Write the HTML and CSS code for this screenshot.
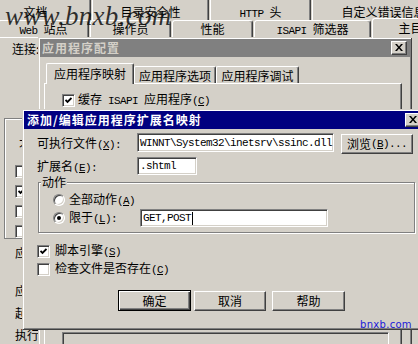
FILE: index.html
```html
<!DOCTYPE html>
<html lang="zh-CN">
<head>
    <meta charset="UTF-8">
    <title>添加/编辑应用程序扩展名映射</title>
    <link rel="stylesheet" href="styles.css">
</head>
<body>
    <!-- site properties sheet, behind both dialogs -->
    <div class="sheet">
        <div class="tabrow row1">
            <div class="tab w-doc">文档</div>
            <div class="tab w-sec">目录安全性</div>
            <div class="tab w-http"><span class="a">HTTP </span>头</div>
            <div class="tab w-err">自定义错误信息</div>
        </div>
        <div class="tabrow row2">
            <div class="tab w-web"><span class="a">Web </span>站点</div>
            <div class="tab w-op">操作员</div>
            <div class="tab w-perf">性能</div>
            <div class="tab w-isapi"><span class="a">ISAPI </span>筛选器</div>
            <div class="tab w-home on">主目录</div>
        </div>
        <div class="sheet-body">
            <div class="conn">连接:</div>
            <div class="sheet-group">
                <div class="cut">不</div>
                <div class="chk"></div>
                <div class="chk"><svg width="7" height="7" viewBox="0 0 7 7"><path d="M0.5 3l2 2 4-4" fill="none" stroke="#000" stroke-width="1.8"/></svg></div>
                <div class="chk"></div>
                <div class="chk"></div>
            </div>
            <div class="side side-1">应</div>
            <div class="side side-2">应</div>
            <div class="side side-3">起</div>
            <div class="side side-4">执行</div>
        </div>
    </div>

    <!-- 应用程序配置 (inactive) -->
    <div class="win cfg">
        <div class="title">
            <span>应用程序配置</span>
            <div class="close"><svg width="8" height="7" viewBox="0 0 8 7"><path d="M0 0h2l2 2.5L6 0h2L5 3.5 8 7H6L4 4.5 2 7H0l3-3.5z"/></svg></div>
        </div>
        <div class="cfg-body">
            <div class="ctabs">
                <div class="ctab on w-map">应用程序映射</div>
                <div class="ctab w-opt">应用程序选项</div>
                <div class="ctab w-dbg">应用程序调试</div>
            </div>
            <div class="cpanel">
                <div class="check-row">
                    <div class="chk"><svg width="7" height="7" viewBox="0 0 7 7"><path d="M0.5 3l2 2 4-4" fill="none" stroke="#000" stroke-width="1.8"/></svg></div>
                    <span>缓存<span class="a"> ISAPI </span>应用程序<span class="a">(<u>C</u>)</span></span>
                </div>
                <div class="listbox"></div>
            </div>
        </div>
    </div>

    <!-- 添加/编辑应用程序扩展名映射 (active) -->
    <div class="win map">
        <div class="title active">
            <span>添加/编辑应用程序扩展名映射</span>
            <div class="close"><svg width="8" height="7" viewBox="0 0 8 7"><path d="M0 0h2l2 2.5L6 0h2L5 3.5 8 7H6L4 4.5 2 7H0l3-3.5z"/></svg></div>
        </div>
        <div class="map-body">
            <div class="field-row">
                <label class="field-label">可执行文件<span class="a">(<u>X</u>):</span></label>
                <div class="edit exe">WINNT\System32\inetsrv\ssinc.dll</div>
                <button class="btn browse">浏览<span class="a">(<u>B</u>)...</span></button>
            </div>
            <div class="field-row row-ext">
                <label class="field-label">扩展名<span class="a">(<u>E</u>):</span></label>
                <div class="edit ext">.shtml</div>
            </div>
            <fieldset class="verbs">
                <legend>动作</legend>
                <div class="verbs-inner">
                    <div class="opt-row">
                        <div class="radio"></div>
                        <span>全部动作<span class="a">(<u>A</u>)</span></span>
                    </div>
                    <div class="opt-row row-limit">
                        <div class="radio on"></div>
                        <span class="opt-label">限于<span class="a">(<u>L</u>):</span></span>
                        <div class="edit verb-list">GET,POST<span class="caret"></span></div>
                    </div>
                </div>
            </fieldset>
            <div class="check-row first">
                <div class="chk"><svg width="7" height="7" viewBox="0 0 7 7"><path d="M0.5 3l2 2 4-4" fill="none" stroke="#000" stroke-width="1.8"/></svg></div>
                <span>脚本引擎<span class="a">(<u>S</u>)</span></span>
            </div>
            <div class="check-row">
                <div class="chk"></div>
                <span>检查文件是否存在<span class="a">(<u>C</u>)</span></span>
            </div>
            <div class="btn-row">
                <button class="btn def">确定</button>
                <button class="btn cancel">取消</button>
                <button class="btn help">帮助</button>
            </div>
        </div>
    </div>

    <div class="mark mark-top">www.bnxb.com</div>
    <div class="mark mark-bottom">bnxb.com</div>
</body>
</html>
```

FILE: styles.css
```css
* {
    box-sizing: border-box;
}
body {
    margin: 0;
    width: 418px;
    height: 344px;
    overflow: hidden;
    position: relative;
    background: #d4d0c8;
    color: #000;
    font-family: "Noto Sans CJK SC", sans-serif;
    font-size: 12px;
    line-height: 12px;
}
.a {
    font-family: "Liberation Mono", monospace;
    font-size: 11px;
    letter-spacing: -0.6px;
}
u {
    text-underline-offset: 1px;
}

/* back property sheet */
.sheet {
    width: 418px;
    height: 344px;
}
.tabrow {
    display: flex;
    gap: 1px;
    white-space: nowrap;
}
.row1 {
    margin: -3px 0 0 -20px;
    height: 23px;
}
.row2 {
    margin-left: -2px;
    height: 17px;
    align-items: flex-start;
}
.tab {
    flex: none;
    text-align: center;
    background: #d4d0c8;
    border: 1px solid #fff;
    border-bottom: none;
    border-right-color: #404040;
    box-shadow: inset -1px 0 #808080;
    border-radius: 3px 3px 0 0;
}
.row1 .tab {
    height: 23px;
    padding-top: 8px;
}
.row2 .tab {
    height: 17px;
    padding-top: 2px;
}
.row2 .tab.on {
    height: 20px;
    margin-top: -2px;
    padding-top: 3px;
    position: relative;
    z-index: 1;
}
.w-doc { width: 111px; }
.w-sec { width: 117px; }
.w-http { width: 101px; }
.w-err { width: 143px; }
.w-web { width: 91px; }
.w-op { width: 81px; }
.w-perf { width: 81px; }
.w-isapi { width: 117px; }
.w-home { width: 89px; }

.sheet-body {
    border-top: 1px solid #fff;
    padding: 5px 0 0 4px;
    height: 307px;
}
.conn {
    margin-left: 8px;
}
.sheet-group {
    margin-top: 63px;
    width: 40px;
    height: 121px;
    border-top: 1px solid #808080;
    border-left: 1px solid #808080;
    border-bottom: 1px solid #808080;
    box-shadow: inset 1px 1px #fff;
    padding: 20px 0 0 10px;
}
.cut {
    margin-left: 4px;
}
.sheet-group .chk {
    margin-top: 7px;
}
.sheet-group .cut + .chk {
    margin-top: 14px;
}
.side {
    margin-left: 11px;
}
.side-1 { margin-top: 8px; }
.side-2 { margin-top: 26px; }
.side-3 { margin-top: 10px; }
.side-4 { margin-top: 10px; }

/* windows */
.win {
    position: absolute;
    background: #d4d0c8;
    border: 1px solid;
    border-color: #d4d0c8 #404040 #404040 #d4d0c8;
    box-shadow: inset 1px 1px #fff, inset -1px -1px #808080;
    padding: 1px;
}
.cfg {
    left: 38px;
    top: 37px;
    width: 374px;
    height: 330px;
}
.map {
    left: 22px;
    top: 109px;
    width: 403px;
    height: 221px;
}
.title {
    display: flex;
    align-items: center;
    height: 18px;
    padding: 0 3px 0 2px;
    font-weight: bold;
    letter-spacing: 1px;
    white-space: nowrap;
    background: #808080;
    color: #d4d0c8;
}
.title.active {
    background: #000080;
    color: #fff;
    padding: 0 2px 0 3px;
}
.close {
    margin-left: auto;
    width: 16px;
    height: 14px;
    background: #d4d0c8;
    border: 1px solid;
    border-color: #fff #404040 #404040 #fff;
    box-shadow: inset -1px -1px #808080;
    display: flex;
    align-items: center;
    justify-content: center;
    padding: 0 1px 1px 0;
}

/* shared controls */
.chk {
    flex: none;
    width: 13px;
    height: 13px;
    background: #fff;
    border: 1px solid;
    border-color: #808080 #fff #fff #808080;
    box-shadow: inset 1px 1px #404040, inset -1px -1px #d4d0c8;
    display: flex;
    align-items: center;
    justify-content: center;
}
.radio {
    flex: none;
    width: 12px;
    height: 12px;
    border-radius: 50%;
    background: #fff;
    border: 1px solid;
    border-color: #808080 #fff #fff #808080;
    box-shadow: inset 1px 1px #404040, inset -1px -1px #d4d0c8;
    display: flex;
    align-items: center;
    justify-content: center;
}
.radio.on::after {
    content: "";
    width: 4px;
    height: 4px;
    border-radius: 50%;
    background: #000;
}
.edit {
    flex: none;
    display: flex;
    align-items: center;
    background: #fff;
    border: 1px solid;
    border-color: #808080 #fff #fff #808080;
    box-shadow: inset 1px 1px #404040, inset -1px -1px #d4d0c8;
    padding: 0 0 0 2px;
    overflow: hidden;
    white-space: nowrap;
    font-family: "Liberation Mono", monospace;
    font-size: 11px;
    letter-spacing: -0.6px;
}
.btn {
    flex: none;
    font: inherit;
    color: #000;
    padding: 0;
    background: #d4d0c8;
    border: 1px solid;
    border-color: #fff #404040 #404040 #fff;
    box-shadow: inset -1px -1px #808080;
    display: flex;
    align-items: center;
    justify-content: center;
    white-space: nowrap;
}
.check-row {
    display: flex;
    align-items: center;
    gap: 3px;
}

/* 应用程序配置 */
.cfg-body {
    padding: 6px 8px 0 4px;
}
.ctabs {
    display: flex;
    align-items: flex-end;
    height: 20px;
    padding-left: 2px;
    white-space: nowrap;
}
.ctab {
    flex: none;
    height: 17px;
    padding-top: 3px;
    text-align: center;
    background: #d4d0c8;
    border: 1px solid #fff;
    border-bottom: none;
    border-right-color: #404040;
    box-shadow: inset -1px 0 #808080;
    border-radius: 2px 2px 0 0;
}
.ctab.on {
    height: 21px;
    margin-bottom: -1px;
    padding-top: 4px;
    position: relative;
    z-index: 1;
}
.w-map { width: 88px; }
.w-opt { width: 82px; }
.w-dbg { width: 83px; }
.cpanel {
    height: 270px;
    border: 1px solid;
    border-color: #fff #404040 #404040 #fff;
    box-shadow: inset -1px -1px #808080;
    padding: 9px 0 0 17px;
}
.listbox {
    margin-top: 225px;
    width: 327px;
    height: 40px;
    border: 1px solid;
    border-color: #808080 #fff #fff #808080;
    box-shadow: inset 1px 1px #404040;
}

/* 添加/编辑应用程序扩展名映射 */
.map-body {
    padding: 4px 0 0 13px;
}
.field-row {
    display: flex;
    align-items: flex-start;
}
.field-label {
    flex: none;
    width: 100px;
    padding-top: 4px;
}
.exe {
    width: 197px;
    height: 19px;
}
.browse {
    margin: 1px 0 0 7px;
    width: 72px;
    height: 20px;
}
.row-ext {
    margin-top: 3px;
}
.row-ext .field-label {
    padding-top: 3px;
}
.ext {
    width: 60px;
    height: 18px;
}
.verbs {
    margin: 1px 0 0 1px;
    padding: 0;
    width: 377px;
    min-width: 0;
    border: 1px solid #808080;
    box-shadow: inset 1px 1px #fff, 1px 1px #fff;
}
.verbs legend {
    margin-left: 2px;
    padding: 0 1px;
    line-height: 12px;
    background: #d4d0c8;
}
.verbs-inner {
    padding: 6px 0 5px 14px;
}
.opt-row {
    display: flex;
    align-items: center;
    gap: 4px;
    height: 12px;
}
.row-limit {
    margin-top: 3px;
    height: 18px;
}
.opt-label {
    width: 67px;
}
.verb-list {
    width: 188px;
    height: 18px;
}
.caret {
    display: inline-block;
    width: 1px;
    height: 13px;
    margin-left: 1px;
    background: #000;
}
.map .check-row {
    gap: 5px;
    margin-top: 4px;
}
.map .check-row.first {
    margin-top: 11px;
}
.btn-row {
    display: flex;
    align-items: flex-start;
    margin-top: 14px;
    padding-left: 81px;
}
.btn.def {
    width: 73px;
    height: 21px;
    border-color: #000;
    box-shadow: inset 1px 1px #fff, inset -1px -1px #404040, inset -2px -2px #808080;
}
.btn.cancel {
    width: 72px;
    height: 20px;
    margin: 1px 0 0 3px;
}
.btn.help {
    width: 73px;
    height: 20px;
    margin: 1px 0 0 6px;
}

/* site watermarks */
.mark {
    position: absolute;
    white-space: nowrap;
}
.mark-top {
    left: 5px;
    top: 4px;
    font: italic 27px/24px "Liberation Serif", serif;
    letter-spacing: 0.3px;
    color: rgba(15, 15, 15, 0.85);
}
.mark-bottom {
    left: 360px;
    top: 319px;
    font: 10px/12px "DejaVu Sans", sans-serif;
    letter-spacing: 0.3px;
    color: #1a1ad8;
}
```
